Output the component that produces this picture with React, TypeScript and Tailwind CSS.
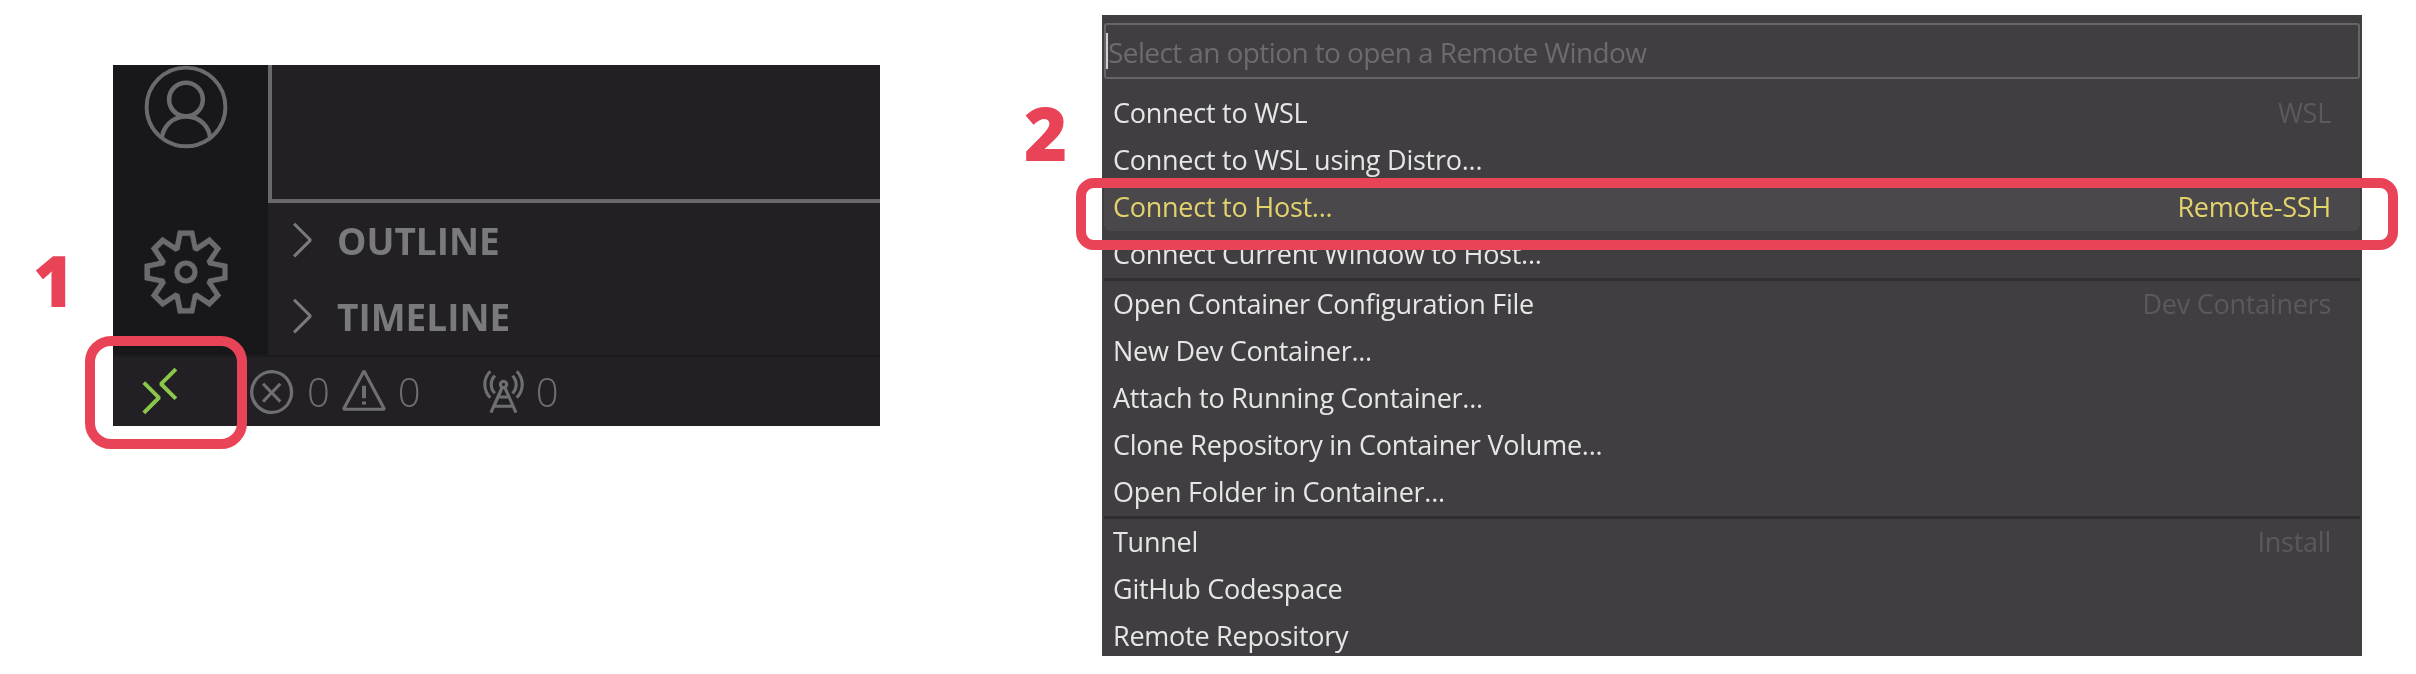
import {
  VscAccount,
  VscChevronRight,
  VscError,
  VscRadioTower,
  VscRemote,
  VscSettingsGear,
  VscWarning,
} from 'react-icons/vsc';

type MenuItem = { label: string; source?: string; active?: boolean };

const menuGroups: MenuItem[][] = [
  [
    { label: 'Connect to WSL', source: 'WSL' },
    { label: 'Connect to WSL using Distro...' },
    { label: 'Connect to Host...', source: 'Remote-SSH', active: true },
    { label: 'Connect Current Window to Host...' },
  ],
  [
    { label: 'Open Container Configuration File', source: 'Dev Containers' },
    { label: 'New Dev Container...' },
    { label: 'Attach to Running Container...' },
    { label: 'Clone Repository in Container Volume...' },
    { label: 'Open Folder in Container...' },
  ],
  [
    { label: 'Tunnel', source: 'Install' },
    { label: 'GitHub Codespace' },
    { label: 'Remote Repository' },
  ],
];

const StepNumber = ({ value, className }: { value: string; className: string }) => (
  <div className={`font-['Open_Sans',sans-serif] leading-none font-extrabold text-[#e84357] ${className}`}>
    {value}
  </div>
);

const ActivityBar = () => (
  <div className="w-[155px] shrink-0 overflow-hidden bg-[#18181a] flex flex-col items-center pr-[10px] text-[#6b6a6c]">
    <VscAccount className="shrink-0 stroke-[#18181a] stroke-[0.25px]" size={84} />
    <VscSettingsGear className="mt-[81px] shrink-0 stroke-[#18181a] stroke-[0.25px]" size={84} />
  </div>
);

const SectionRow = ({ title }: { title: string }) => (
  <div className="h-[48px] flex items-center text-[#7a797b]">
    <VscChevronRight className="ml-[5px] shrink-0" size={56} />
    <span className="ml-[8px] font-['Open_Sans',sans-serif] text-[37px] font-bold leading-none">{title}</span>
  </div>
);

const StatusBar = () => (
  <div className="h-[71px] shrink-0 border-t-2 border-[#1b1a1c] flex items-center pl-[20px] text-[#6f6e70] font-['Open_Sans',sans-serif] text-[40px] font-light">
    <VscRemote className="text-[#8cc84b] shrink-0 stroke-[#8cc84b] stroke-[0.3px]" size={54} />
    <VscError className="ml-[60px] shrink-0" size={50} />
    <span className="ml-[10px]">0</span>
    <VscWarning className="ml-[9px] shrink-0" size={50} />
    <span className="ml-[9px]">0</span>
    <VscRadioTower className="ml-[56px] shrink-0" size={50} />
    <span className="ml-[9px]">0</span>
  </div>
);

const EditorPanel = () => (
  <div className="mt-[65px] w-[767px] h-[361px] shrink-0 flex flex-col overflow-hidden bg-[#222024] blur-[0.6px]">
    <div className="flex flex-1 min-h-0">
      <ActivityBar />
      <div className="flex-1 flex flex-col">
        <div className="h-[138px] border-l-4 border-b-4 border-[#6a686b]" />
        <div className="pt-[13px]">
          <SectionRow title="OUTLINE" />
          <div className="h-[28px]" />
          <SectionRow title="TIMELINE" />
        </div>
      </div>
    </div>
    <StatusBar />
  </div>
);

const MenuRow = ({ label, source, active }: MenuItem) => (
  <div
    className={`h-[47px] flex items-center justify-between pl-[9px] pr-[29px] rounded-md ${
      active ? 'bg-[#4a484b] text-[#e3d36d]' : 'text-[#e6e6e6]'
    }`}
  >
    <span>{label}</span>
    {source && <span className={active ? 'text-[#e3d36d]' : 'text-[#5b595c]'}>{source}</span>}
  </div>
);

const RemoteMenu = () => (
  <div className="mt-[15px] w-[1260px] h-[641px] shrink-0 overflow-hidden bg-[#403e41] pt-[8px] px-[2px] font-['Open_Sans',sans-serif] text-[27px] tracking-[-0.25px] blur-[0.5px]">
    <div className="h-[56px] flex items-center border-2 border-[#666467] rounded-[3px] text-[#6d6b6e] text-[28px] tracking-[-0.6px]">
      <span className="w-[2px] h-[36px] bg-[#cfcfcf] shrink-0" />
      <span className="mt-[2px]">Select an option to open a Remote Window</span>
    </div>
    <div className="pt-[11px]">
      {menuGroups.map((group, i) => (
        <div key={i} className={i > 0 ? 'border-t-[3px] border-[#2f2d30]' : ''}>
          {group.map((item) => (
            <MenuRow key={item.label} {...item} />
          ))}
        </div>
      ))}
    </div>
  </div>
);

export default function App() {
  return (
    <div className="relative w-[2416px] h-[674px] overflow-hidden bg-white flex items-start">
      <StepNumber value="1" className="w-[113px] mt-[245px] pl-[33px] shrink-0 text-[70px]" />
      <EditorPanel />
      <StepNumber value="2" className="w-[78px] ml-[144px] mt-[96px] shrink-0 text-[74px]" />
      <RemoteMenu />

      {/* highlight boxes drawn over the screenshots */}
      <div className="absolute left-[85px] top-[336px] w-[162px] h-[113px] border-[10px] border-[#e84357] rounded-[26px]" />
      <div className="absolute left-[1076px] top-[178px] w-[1322px] h-[72px] border-[10px] border-[#e84357] rounded-[18px]" />
    </div>
  );
}
